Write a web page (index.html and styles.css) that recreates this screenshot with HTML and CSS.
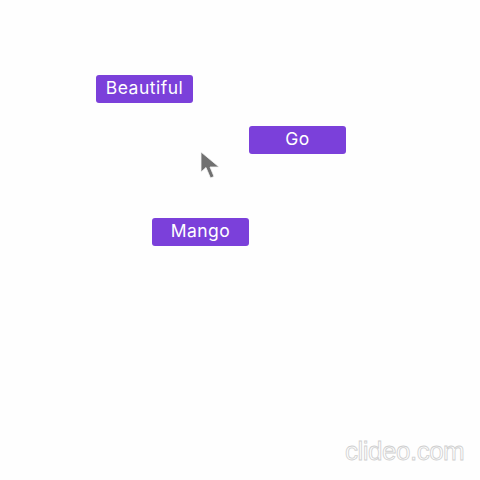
FILE: index.html
```html
<!DOCTYPE html>
<html>
<head>
<meta charset="utf-8">
<link rel="stylesheet" href="styles.css">
</head>
<body>
<div class="canvas">
  <button class="word word-beautiful">Beautiful</button>
  <button class="word word-go">Go</button>
  <button class="word word-mango">Mango</button>
  <svg class="cursor" width="22" height="29" viewBox="0 0 22 29">
    <path d="M1 1 L1 21 L6 16.5 L10.5 27 L14 25.5 L10 16 L19 16 Z" fill="#707070" stroke="#f4f4f4" stroke-width="0.8" stroke-linejoin="round"/>
  </svg>
  <div class="watermark">clideo.com</div>
</div>
</body>
</html>
```
FILE: styles.css
```css
html, body {
  margin: 0;
  padding: 0;
  background: #fefefe;
}
.canvas {
  position: relative;
  width: 480px;
  height: 480px;
  overflow: hidden;
  font-family: Inter, "Noto Sans", sans-serif;
}
.word {
  position: absolute;
  width: 97px;
  height: 28px;
  border: none;
  border-radius: 3px;
  background: #7b40da;
  color: #ffffff;
  font-family: Inter, "Noto Sans", sans-serif;
  font-size: 17.5px;
  letter-spacing: 0.5px;
  line-height: 25px;
  padding: 0 0 3px 0;
  text-align: center;
}
.word-beautiful { left: 96px; top: 75px; }
.word-go { left: 249px; top: 126px; }
.word-mango { left: 152px; top: 218px; }
.cursor {
  position: absolute;
  left: 200px;
  top: 151px;
}
.watermark {
  position: absolute;
  left: 345px;
  top: 436px;
  font-family: "Liberation Sans", Arial, sans-serif;
  font-size: 26px;
  letter-spacing: -0.5px;
  color: #fefefe;
  -webkit-text-stroke: 0.8px #cfcfcf;
}
```
